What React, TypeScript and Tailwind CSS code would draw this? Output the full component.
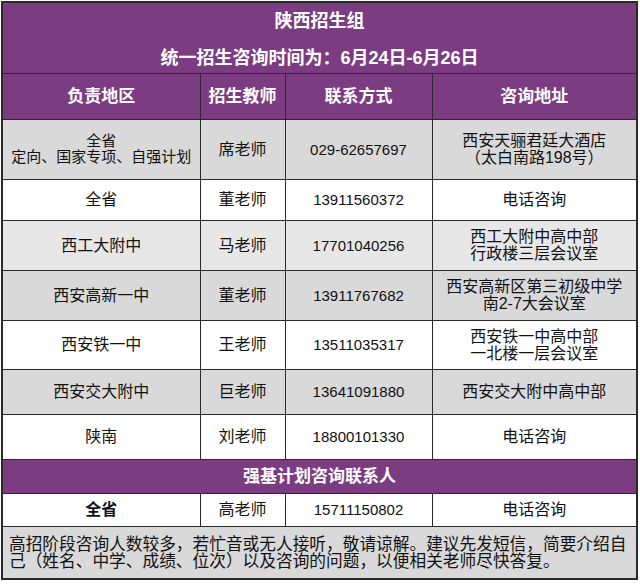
const rows = [
  { area: ['全省', '定向、国家专项、自强计划'], teacher: '席老师', phone: '029-62657697', addr: ['西安天骊君廷大酒店', '（太白南路198号）'], bg: 'bg-[#d9d9d9]', h: 'h-[60px]' },
  { area: ['全省'], teacher: '董老师', phone: '13911560372', addr: ['电话咨询'], bg: 'bg-white', h: 'h-[41px]' },
  { area: ['西工大附中'], teacher: '马老师', phone: '17701040256', addr: ['西工大附中高中部', '行政楼三层会议室'], bg: 'bg-[#e7e7e7]', h: 'h-[50px]' },
  { area: ['西安高新一中'], teacher: '董老师', phone: '13911767682', addr: ['西安高新区第三初级中学', '南2-7大会议室'], bg: 'bg-[#d9d9d9]', h: 'h-[50px]' },
  { area: ['西安铁一中'], teacher: '王老师', phone: '13511035317', addr: ['西安铁一中高中部', '一北楼一层会议室'], bg: 'bg-white', h: 'h-[49px]' },
  { area: ['西安交大附中'], teacher: '巨老师', phone: '13641091880', addr: ['西安交大附中高中部'], bg: 'bg-[#d9d9d9]', h: 'h-[45px]' },
  { area: ['陕南'], teacher: '刘老师', phone: '18800101330', addr: ['电话咨询'], bg: 'bg-white', h: 'h-[45px]' },
];

const cell = 'border border-[#2a2a2a] text-center align-middle p-0';

export default function App() {
  return (
    <div className="w-[640px] h-[585px] bg-white pt-[1px] pl-[1px]" style={{ fontFamily: '"Liberation Sans", "Noto Sans CJK SC", sans-serif' }}>
      <table className="w-[635px] border-collapse border-2 border-[#2a2a2a] table-fixed text-[16px] text-[#111] leading-[17px]">
        <colgroup>
          <col className="w-[198px]" />
          <col className="w-[85px]" />
          <col className="w-[147px]" />
          <col className="w-[205px]" />
        </colgroup>
        <tbody>
          <tr className="h-[71px] bg-[#7b3c81]">
            <td colSpan={4} className={`${cell} text-white font-bold pt-[3px]`}>
              <div className="text-[18px] leading-[20px]">陕西招生组</div>
              <div className="text-[18px] leading-[20px] mt-[17px]">统一招生咨询时间为：6月24日-6月26日</div>
            </td>
          </tr>
          <tr className="h-[46px] bg-[#7b3c81] text-white font-bold text-[17px]">
            <td className={cell}>负责地区</td>
            <td className={cell}>招生教师</td>
            <td className={cell}>联系方式</td>
            <td className={cell}>咨询地址</td>
          </tr>
          {rows.map((r, i) => (
            <tr key={i} className={`${r.h} ${r.bg}`}>
              <td className={cell}>
                {r.area.length > 1 ? (
                  <div className="text-[15px] leading-[16px]">
                    <div>{r.area[0]}</div>
                    <div>{r.area[1]}</div>
                  </div>
                ) : (
                  r.area[0]
                )}
              </td>
              <td className={cell}>{r.teacher}</td>
              <td className={`${cell} text-[15px]`}>{r.phone}</td>
              <td className={cell}>
                {r.addr.map((a) => (
                  <div key={a}>{a}</div>
                ))}
              </td>
            </tr>
          ))}
          <tr className="h-[34px] bg-[#7b3c81]">
            <td colSpan={4} className={`${cell} text-white font-bold text-[17px]`}>强基计划咨询联系人</td>
          </tr>
          <tr className="h-[33px] bg-white">
            <td className={`${cell} font-bold`}>全省</td>
            <td className={cell}>高老师</td>
            <td className={`${cell} text-[15px]`}>15711150802</td>
            <td className={cell}>电话咨询</td>
          </tr>
          <tr className="h-[53px] bg-[#d9d9d9]">
            <td colSpan={4} className="border border-[#2a2a2a] text-left align-top pl-[6px] pr-[2px] pt-[9px] text-[16.7px] leading-[17px]">
              高招阶段咨询人数较多，若忙音或无人接听，敬请谅解。建议先发短信，简要介绍自己（姓名、中学、成绩、位次）以及咨询的问题，以便相关老师尽快答复。
            </td>
          </tr>
        </tbody>
      </table>
    </div>
  );
}
